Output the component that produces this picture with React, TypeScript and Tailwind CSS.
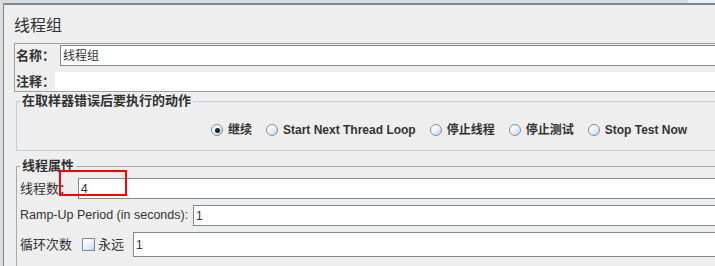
import React from 'react';

const radios = [
  { label: '继续', checked: true },
  { label: 'Start Next Thread Loop', checked: false },
  { label: '停止线程', checked: false },
  { label: '停止测试', checked: false },
  { label: 'Stop Test Now', checked: false },
];

function Radio({ checked }: { checked: boolean }) {
  return (
    <span className="flex h-[12px] w-[12px] shrink-0 items-center justify-center rounded-full border border-[#7f8fa1] bg-gradient-to-br from-white via-[#eef3f9] to-[#b9cde3]">
      {checked && <span className="h-[5px] w-[5px] rounded-full bg-[#222]" />}
    </span>
  );
}

function Field({ value, className }: { value: string; className: string }) {
  return (
    <div className={`flex flex-1 items-center border border-[#7a8a99] bg-white pl-[2px] text-[12px] text-[#333] ${className}`}>
      {value}
    </div>
  );
}

export default function App() {
  return (
    <div className="relative h-[266px] w-[715px] overflow-hidden bg-[#eeeeee] font-['Liberation_Sans','Noto_Sans_CJK_SC',sans-serif] text-[#333]">
      <div className="h-[3px] w-[688px] bg-[#dadada]" />
      <div className="flex h-[263px]">
        <div className="w-[3px] shrink-0 bg-[#dcdcdc]" />
        <div className="-mr-[30px] flex-1 border-t-2 border-l border-[#7a8a99]">
          {/* title */}
          <div className="mt-[12px] pl-[10px] text-[16px] leading-[18px]">线程组</div>

          {/* name + comment */}
          <div className="ml-[10px] mt-[8px] border border-[#a0a0a0] pt-[1px]">
            <div className="flex h-[21px]">
              <div className="flex w-[45px] items-center pl-[1px] text-[13px] font-bold">名称：</div>
              <Field value="线程组" className="pl-[1px]" />
            </div>
            <div className="mt-[6px] flex h-[19px]">
              <div className="flex w-[40px] items-center pl-[1px] text-[13px] font-bold">注释：</div>
              <div className="flex-1 bg-white" />
            </div>
          </div>

          {/* action on error */}
          <fieldset className="ml-[12px] mt-[1px] border border-[#b8cfe5]">
            <legend className="ml-[3px] px-[2px] text-[13px] font-bold leading-[16px]">在取样器错误后要执行的动作</legend>
            <div className="flex h-[20px] items-center gap-[14px] pl-[194px] pt-[0px] mt-[11px] mb-[10px] text-[12px] font-bold">
              {radios.map((r) => (
                <label key={r.label} className="flex items-center gap-[5px] whitespace-nowrap">
                  <Radio checked={r.checked} />
                  <span>{r.label}</span>
                </label>
              ))}
            </div>
          </fieldset>

          {/* thread properties */}
          <fieldset className="ml-[12px] mt-[7px] border border-[#a8a8a8] pb-[20px]">
            <legend className="ml-[3px] px-[2px] text-[13px] font-bold leading-[16px]">线程属性</legend>
            <div className="mt-[4px] flex h-[21px] pl-[3px]">
              <div className="flex w-[58px] items-center text-[13px]">线程数：</div>
              <Field value="4" className="" />
            </div>
            <div className="mt-[6px] flex h-[21px] pl-[3px]">
              <div className="flex w-[173px] items-center text-[12.5px]">Ramp-Up Period (in seconds):</div>
              <Field value="1" className="" />
            </div>
            <div className="mt-[6px] flex h-[25px] pl-[3px]">
              <div className="flex w-[62px] items-center text-[13px]">循环次数</div>
              <div className="flex w-[51px] items-center gap-[3px]">
                <span className="h-[13px] w-[13px] shrink-0 border border-[#7a8a99] bg-gradient-to-br from-white via-[#eef3f9] to-[#c0d2e6]" />
                <span className="text-[13px]">永远</span>
              </div>
              <Field value="1" className="" />
            </div>
          </fieldset>
        </div>
      </div>

      {/* highlight box */}
      <div className="absolute left-[59px] top-[170px] h-[26px] w-[68px] border-2 border-[#ff0000]" />
    </div>
  );
}
